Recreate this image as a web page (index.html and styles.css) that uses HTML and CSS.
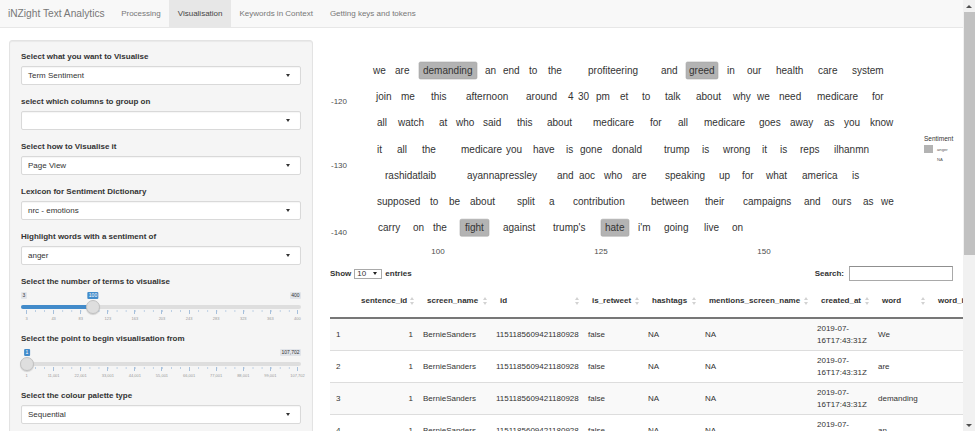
FILE: index.html
```html
<!DOCTYPE html>
<html lang="en">
<head>
<meta charset="utf-8">
<title>iNZight Text Analytics</title>
<link rel="stylesheet" href="styles.css">
</head>
<body>
<div class="page">
  <nav class="navbar">
    <span class="brand">iNZight Text Analytics</span>
    <a class="nav-tab">Processing</a>
    <a class="nav-tab active">Visualisation</a>
    <a class="nav-tab">Keywords in Context</a>
    <a class="nav-tab">Getting keys and tokens</a>
  </nav>
  <div class="layout">
    <aside class="sidebar">
      <div class="fg">
        <label class="fg-label">Select what you want to Visualise</label>
        <div class="select"><span>Term Sentiment</span><i class="caret"></i></div>
      </div>
      <div class="fg">
        <label class="fg-label">select which columns to group on</label>
        <div class="select"><span></span><i class="caret"></i></div>
      </div>
      <div class="fg">
        <label class="fg-label">Select how to Visualise it</label>
        <div class="select"><span>Page View</span><i class="caret"></i></div>
      </div>
      <div class="fg">
        <label class="fg-label">Lexicon for Sentiment Dictionary</label>
        <div class="select"><span>nrc - emotions</span><i class="caret"></i></div>
      </div>
      <div class="fg">
        <label class="fg-label">Highlight words with a sentiment of</label>
        <div class="select"><span>anger</span><i class="caret"></i></div>
      </div>
      <div class="fg">
        <label class="fg-label flush">Select the number of terms to visualise</label>
        <div class="irs">
          <div class="irs-top"><span class="irs-minmax">3</span><span class="irs-minmax">400</span></div>
          <div class="irs-line"><div class="irs-bar" style="width:72px"></div></div>
          <span class="irs-single" style="left:72px">100</span>
          <span class="irs-handle" style="left:72px"></span>
          <div class="irs-grid">
            <span class="gt"><span>3</span></span>
            <span class="gt"><span>43</span></span>
            <span class="gt"><span>83</span></span>
            <span class="gt"><span>123</span></span>
            <span class="gt"><span>163</span></span>
            <span class="gt"><span>203</span></span>
            <span class="gt"><span>243</span></span>
            <span class="gt"><span>283</span></span>
            <span class="gt"><span>323</span></span>
            <span class="gt"><span>363</span></span>
            <span class="gt"><span>400</span></span>
          </div>
        </div>
      </div>
      <div class="fg">
        <label class="fg-label flush">Select the point to begin visualisation from</label>
        <div class="irs">
          <div class="irs-top end"><span class="irs-minmax">107,702</span></div>
          <div class="irs-line"><div class="irs-bar" style="width:6px"></div></div>
          <span class="irs-single" style="left:6px">1</span>
          <span class="irs-handle" style="left:6px"></span>
          <div class="irs-grid">
            <span class="gt"><span>1</span></span>
            <span class="gt"><span>11,001</span></span>
            <span class="gt"><span>22,001</span></span>
            <span class="gt"><span>33,001</span></span>
            <span class="gt"><span>44,001</span></span>
            <span class="gt"><span>55,001</span></span>
            <span class="gt"><span>66,001</span></span>
            <span class="gt"><span>77,001</span></span>
            <span class="gt"><span>88,001</span></span>
            <span class="gt"><span>99,001</span></span>
            <span class="gt"><span>107,702</span></span>
          </div>
        </div>
      </div>
      <div class="fg">
        <label class="fg-label">Select the colour palette type</label>
        <div class="select"><span>Sequential</span><i class="caret"></i></div>
      </div>
    </aside>

    <main class="main">
      <svg class="plot" width="643" height="232" viewBox="320 28 643 232">
        <rect class="hl" x="419" y="62" width="58" height="17" rx="1.5"/>
        <rect class="hl" x="686" y="62" width="32" height="17" rx="1.5"/>
        <rect class="hl" x="460" y="219.2" width="29" height="17" rx="1.5"/>
        <rect class="hl" x="601" y="219.2" width="28" height="17" rx="1.5"/>

        <text class="w" y="74"><tspan x="373">we</tspan><tspan x="395">are</tspan><tspan x="423">demanding</tspan><tspan x="485">an</tspan><tspan x="503">end</tspan><tspan x="529">to</tspan><tspan x="548">the</tspan><tspan x="588">profiteering</tspan><tspan x="661">and</tspan><tspan x="689">greed</tspan><tspan x="727">in</tspan><tspan x="747">our</tspan><tspan x="776">health</tspan><tspan x="818">care</tspan><tspan x="852">system</tspan></text>
        <text class="w" y="100.2"><tspan x="376">join</tspan><tspan x="401">me</tspan><tspan x="431">this</tspan><tspan x="466">afternoon</tspan><tspan x="526">around</tspan><tspan x="568">4</tspan><tspan x="578">30</tspan><tspan x="596">pm</tspan><tspan x="620">et</tspan><tspan x="642">to</tspan><tspan x="665">talk</tspan><tspan x="696">about</tspan><tspan x="733">why</tspan><tspan x="757">we</tspan><tspan x="779">need</tspan><tspan x="817">medicare</tspan><tspan x="872">for</tspan></text>
        <text class="w" y="126.4"><tspan x="377">all</tspan><tspan x="398">watch</tspan><tspan x="439">at</tspan><tspan x="456">who</tspan><tspan x="483">said</tspan><tspan x="517">this</tspan><tspan x="547">about</tspan><tspan x="593">medicare</tspan><tspan x="650">for</tspan><tspan x="678">all</tspan><tspan x="704">medicare</tspan><tspan x="759">goes</tspan><tspan x="790">away</tspan><tspan x="824">as</tspan><tspan x="844">you</tspan><tspan x="870">know</tspan></text>
        <text class="w" y="152.6"><tspan x="377">it</tspan><tspan x="397">all</tspan><tspan x="422">the</tspan><tspan x="461">medicare</tspan><tspan x="506">you</tspan><tspan x="533">have</tspan><tspan x="566">is</tspan><tspan x="580">gone</tspan><tspan x="612">donald</tspan><tspan x="664">trump</tspan><tspan x="702">is</tspan><tspan x="723">wrong</tspan><tspan x="762">it</tspan><tspan x="780">is</tspan><tspan x="800">reps</tspan><tspan x="834">ilhanmn</tspan></text>
        <text class="w" y="178.8"><tspan x="385">rashidatlaib</tspan><tspan x="467">ayannapressley</tspan><tspan x="557">and</tspan><tspan x="579">aoc</tspan><tspan x="604">who</tspan><tspan x="632">are</tspan><tspan x="665">speaking</tspan><tspan x="719">up</tspan><tspan x="742">for</tspan><tspan x="766">what</tspan><tspan x="802">america</tspan><tspan x="852">is</tspan></text>
        <text class="w" y="205"><tspan x="377">supposed</tspan><tspan x="430">to</tspan><tspan x="449">be</tspan><tspan x="470">about</tspan><tspan x="517">split</tspan><tspan x="549">a</tspan><tspan x="573">contribution</tspan><tspan x="651">between</tspan><tspan x="705">their</tspan><tspan x="743">campaigns</tspan><tspan x="804">and</tspan><tspan x="832">ours</tspan><tspan x="863">as</tspan><tspan x="881">we</tspan></text>
        <text class="w" y="231.2"><tspan x="378">carry</tspan><tspan x="413">on</tspan><tspan x="433">the</tspan><tspan x="465">fight</tspan><tspan x="503">against</tspan><tspan x="553">trump's</tspan><tspan x="605">hate</tspan><tspan x="638">i'm</tspan><tspan x="664">going</tspan><tspan x="704">live</tspan><tspan x="732">on</tspan></text>

        <text class="ax end" x="347" y="104">-120</text>
        <text class="ax end" x="347" y="168">-130</text>
        <text class="ax end" x="347" y="235">-140</text>
        <text class="ax mid" x="438" y="254">100</text>
        <text class="ax mid" x="601" y="254">125</text>
        <text class="ax mid" x="764" y="254">150</text>

        <text class="lg-title" x="924" y="141">Sentiment</text>
        <rect class="lg-key" x="924" y="145" width="9" height="8"/>
        <text class="lg-item" x="937" y="151">anger</text>
        <text class="lg-item" x="937" y="161">NA</text>
      </svg>

      <section class="dt">
        <div class="dt-controls">
          <label class="dt-length">Show <span class="dt-select"><span>10</span><i class="dt-arrow"></i></span> entries</label>
          <label class="dt-search">Search: <span class="dt-input"></span></label>
        </div>
        <table class="dt-table">
          <colgroup>
            <col class="w-rn"><col class="w-sid"><col class="w-sn"><col class="w-id"><col class="w-rt"><col class="w-ht"><col class="w-msn"><col class="w-ca"><col class="w-wd"><col class="w-wi">
          </colgroup>
          <thead>
            <tr>
              <th></th>
              <th><div class="th-in"><span>sentence_id</span><svg class="sort" width="4" height="8" viewBox="0 0 4 8"><path d="M2 0L4 3H0ZM2 8L4 5H0Z"/></svg></div></th>
              <th><div class="th-in"><span>screen_name</span><svg class="sort" width="4" height="8" viewBox="0 0 4 8"><path d="M2 0L4 3H0ZM2 8L4 5H0Z"/></svg></div></th>
              <th><div class="th-in"><span>id</span><svg class="sort" width="4" height="8" viewBox="0 0 4 8"><path d="M2 0L4 3H0ZM2 8L4 5H0Z"/></svg></div></th>
              <th><div class="th-in"><span>is_retweet</span><svg class="sort" width="4" height="8" viewBox="0 0 4 8"><path d="M2 0L4 3H0ZM2 8L4 5H0Z"/></svg></div></th>
              <th><div class="th-in"><span>hashtags</span><svg class="sort" width="4" height="8" viewBox="0 0 4 8"><path d="M2 0L4 3H0ZM2 8L4 5H0Z"/></svg></div></th>
              <th><div class="th-in"><span>mentions_screen_name</span><svg class="sort" width="4" height="8" viewBox="0 0 4 8"><path d="M2 0L4 3H0ZM2 8L4 5H0Z"/></svg></div></th>
              <th><div class="th-in"><span>created_at</span><svg class="sort" width="4" height="8" viewBox="0 0 4 8"><path d="M2 0L4 3H0ZM2 8L4 5H0Z"/></svg></div></th>
              <th><div class="th-in"><span>word</span><svg class="sort" width="4" height="8" viewBox="0 0 4 8"><path d="M2 0L4 3H0ZM2 8L4 5H0Z"/></svg></div></th>
              <th class="th-last"><div class="th-in"><span>word_i</span></div></th>
            </tr>
          </thead>
          <tbody>
            <tr><td>1</td><td class="num">1</td><td>BernieSanders</td><td>1151185609421180928</td><td>false</td><td>NA</td><td>NA</td><td>2019-07-<br>16T17:43:31Z</td><td>We</td><td></td></tr>
            <tr><td>2</td><td class="num">1</td><td>BernieSanders</td><td>1151185609421180928</td><td>false</td><td>NA</td><td>NA</td><td>2019-07-<br>16T17:43:31Z</td><td>are</td><td></td></tr>
            <tr><td>3</td><td class="num">1</td><td>BernieSanders</td><td>1151185609421180928</td><td>false</td><td>NA</td><td>NA</td><td>2019-07-<br>16T17:43:31Z</td><td>demanding</td><td></td></tr>
            <tr><td>4</td><td class="num">1</td><td>BernieSanders</td><td>1151185609421180928</td><td>false</td><td>NA</td><td>NA</td><td>2019-07-<br>16T17:43:31Z</td><td>an</td><td></td></tr>
          </tbody>
        </table>
      </section>
    </main>
  </div>
</div>
<div class="scrollbar">
  <span class="sb-btn sb-up"></span>
  <span class="sb-thumb"></span>
  <span class="sb-space"></span>
  <span class="sb-btn sb-down"></span>
</div>
</body>
</html>
```
FILE: styles.css
```css
* { box-sizing: border-box; }

html, body { margin: 0; padding: 0; }

body {
  width: 975px;
  height: 431px;
  overflow: hidden;
  display: flex;
  font-family: "Liberation Sans", Arial, sans-serif;
  color: #333;
  background: #fff;
}

.page {
  width: 963px;
  flex: none;
  overflow: hidden;
  display: flex;
  flex-direction: column;
}

/* ---------- scrollbar ---------- */
.scrollbar {
  width: 12px;
  flex: none;
  background: #f1f1f1;
  display: flex;
  flex-direction: column;
}
.sb-btn {
  height: 12px;
  flex: none;
  display: flex;
  align-items: center;
  justify-content: center;
}
.sb-up::before {
  content: "";
  border-left: 3px solid transparent;
  border-right: 3px solid transparent;
  border-bottom: 3px solid #505050;
}
.sb-down::before {
  content: "";
  border-left: 3px solid transparent;
  border-right: 3px solid transparent;
  border-top: 3px solid #505050;
}
.sb-thumb {
  height: 243px;
  flex: none;
  margin-left: 1px;
  background: #c1c1c1;
}
.sb-space { flex: 1; }

/* ---------- navbar ---------- */
.navbar {
  height: 28px;
  flex: none;
  display: flex;
  background: #f8f8f8;
  border-bottom: 1px solid #e7e7e7;
}
.brand {
  padding: 0 8px 0 8px;
  font-size: 10.2px;
  line-height: 27px;
  color: #777;
}
.nav-tab {
  padding: 0 8.5px;
  font-size: 8px;
  line-height: 27px;
  color: #777;
}
.nav-tab.active {
  background: #e7e7e7;
  color: #444;
}

/* ---------- layout ---------- */
.layout {
  flex: 1;
  min-height: 0;
  display: flex;
  align-items: flex-start;
}
.sidebar {
  width: 304px;
  flex: none;
  margin: 12px 0 0 9px;
  padding: 11px 11px 30px;
  background: #f5f5f5;
  border: 1px solid #e3e3e3;
  border-radius: 3px;
  box-shadow: inset 0 1px 1px rgba(0, 0, 0, 0.05);
}
.main {
  width: 643px;
  flex: none;
  margin-left: 7px;
}

/* ---------- form groups ---------- */
.fg { margin-bottom: 12px; }
.fg-label {
  display: block;
  font-size: 8px;
  font-weight: bold;
  line-height: 10px;
  margin-bottom: 4px;
  white-space: nowrap;
}
.fg-label.flush { margin-bottom: 0; }

.select {
  height: 19px;
  display: flex;
  align-items: center;
  justify-content: space-between;
  padding: 0 10px 0 6px;
  background: #fff;
  border: 1px solid #d9d9d9;
  border-radius: 2px;
  box-shadow: inset 0 1px 1px rgba(0, 0, 0, 0.04);
  font-size: 8px;
  color: #333;
}
.caret {
  width: 0;
  height: 0;
  border-left: 2.5px solid transparent;
  border-right: 2.5px solid transparent;
  border-top: 3px solid #333;
}

/* ---------- range slider ---------- */
.irs {
  position: relative;
  height: 35px;
}
.irs-top {
  display: flex;
  justify-content: space-between;
  padding-top: 5px;
  height: 12px;
}
.irs-top.end { justify-content: flex-end; }
.irs-minmax {
  font-size: 5px;
  line-height: 7px;
  padding: 0 1.5px;
  background: #e1e4e9;
  color: #333;
  border-radius: 1px;
}
.irs-line {
  height: 4px;
  margin-top: 6px;
  background: #dedede;
  border-radius: 2px;
  overflow: hidden;
}
.irs-bar {
  height: 100%;
  background: #428bca;
}
.irs-single {
  position: absolute;
  top: 5px;
  transform: translateX(-50%);
  font-size: 5px;
  line-height: 7px;
  padding: 0 1.5px;
  background: #428bca;
  color: #fff;
  border-radius: 1px;
}
.irs-handle {
  position: absolute;
  top: 13px;
  width: 14px;
  height: 14px;
  margin-left: -7px;
  border-radius: 50%;
  background: #dedede;
  border: 1px solid #c2c2c2;
  box-shadow: 0 1px 1px rgba(0, 0, 0, 0.15);
}
.irs-grid {
  margin: 1px 3px 0 5px;
  height: 12px;
  display: flex;
  justify-content: space-between;
  background-image: linear-gradient(to right, #b9cde3 1px, transparent 1px);
  background-size: calc(100% / 30) 2px;
  background-repeat: repeat-x;
}
.gt {
  width: 1px;
  display: flex;
  flex-direction: column;
  align-items: center;
}
.gt::before {
  content: "";
  width: 1px;
  height: 4px;
  background: #a6c0dc;
}
.gt span {
  margin-top: 2px;
  font-size: 4px;
  line-height: 6px;
  color: #999;
  white-space: nowrap;
}

/* ---------- plot ---------- */
.plot {
  display: block;
}
.plot text {
  font-family: "Liberation Sans", Arial, sans-serif;
}
.w {
  font-size: 10px;
  fill: #333;
}
.hl {
  fill: #b3b3b3;
  stroke: #a6a6a6;
  stroke-width: 0.6;
}
.ax {
  font-size: 8px;
  fill: #4d4d4d;
}
.ax.end { text-anchor: end; }
.ax.mid { text-anchor: middle; }
.lg-title {
  font-size: 6.5px;
  fill: #333;
}
.lg-key { fill: #b3b3b3; }
.lg-item {
  font-size: 4.2px;
  fill: #555;
}

/* ---------- data table ---------- */
.dt {
  padding: 0 10px;
}
.dt-controls {
  margin-top: 6px;
  height: 15px;
  display: flex;
  align-items: center;
  justify-content: space-between;
  font-size: 8px;
  font-weight: bold;
}
.dt-length {
  display: flex;
  align-items: center;
  gap: 3px;
}
.dt-select {
  width: 28px;
  height: 10px;
  display: flex;
  align-items: center;
  justify-content: space-between;
  padding: 0 4px 0 2px;
  border: 1px solid #a9a9a9;
  background: #fff;
  font-weight: normal;
  font-size: 8px;
  line-height: 8px;
}
.dt-arrow {
  border-left: 2.5px solid transparent;
  border-right: 2.5px solid transparent;
  border-top: 3px solid #222;
}
.dt-search {
  display: flex;
  align-items: center;
  gap: 5px;
}
.dt-input {
  width: 104px;
  height: 15px;
  border: 1px solid #a9a9a9;
  border-top-color: #8f8f8f;
  background: #fff;
}

.dt-table {
  width: 633px;
  margin-top: 8px;
  table-layout: fixed;
  border-collapse: separate;
  border-spacing: 0;
  font-size: 8px;
  line-height: 12px;
  color: #333;
}
.w-rn { width: 21px; }
.w-sid { width: 66px; }
.w-sn { width: 73px; }
.w-id { width: 92px; }
.w-rt { width: 60px; }
.w-ht { width: 57px; }
.w-msn { width: 112px; }
.w-ca { width: 61px; }
.w-wd { width: 56px; }
.w-wi { width: 35px; }

.dt-table th {
  padding: 6px 3px 10px 10px;
  text-align: left;
  font-weight: bold;
  white-space: nowrap;
  border-bottom: 2px solid #777;
}
.dt-table th.th-last {
  padding-right: 0;
  overflow: hidden;
}
.th-in {
  display: flex;
  align-items: center;
  justify-content: space-between;
}
.sort { fill: #d2d2d2; flex: none; }

.dt-table td {
  padding: 4px 6px 3px;
  border-top: 1px solid #ddd;
  white-space: nowrap;
  vertical-align: middle;
}
.dt-table tbody tr:first-child td { border-top: 0; }
.dt-table tbody tr:nth-child(odd) { background: #f9f9f9; }
.dt-table td.num {
  text-align: right;
  padding-right: 4px;
}
```
